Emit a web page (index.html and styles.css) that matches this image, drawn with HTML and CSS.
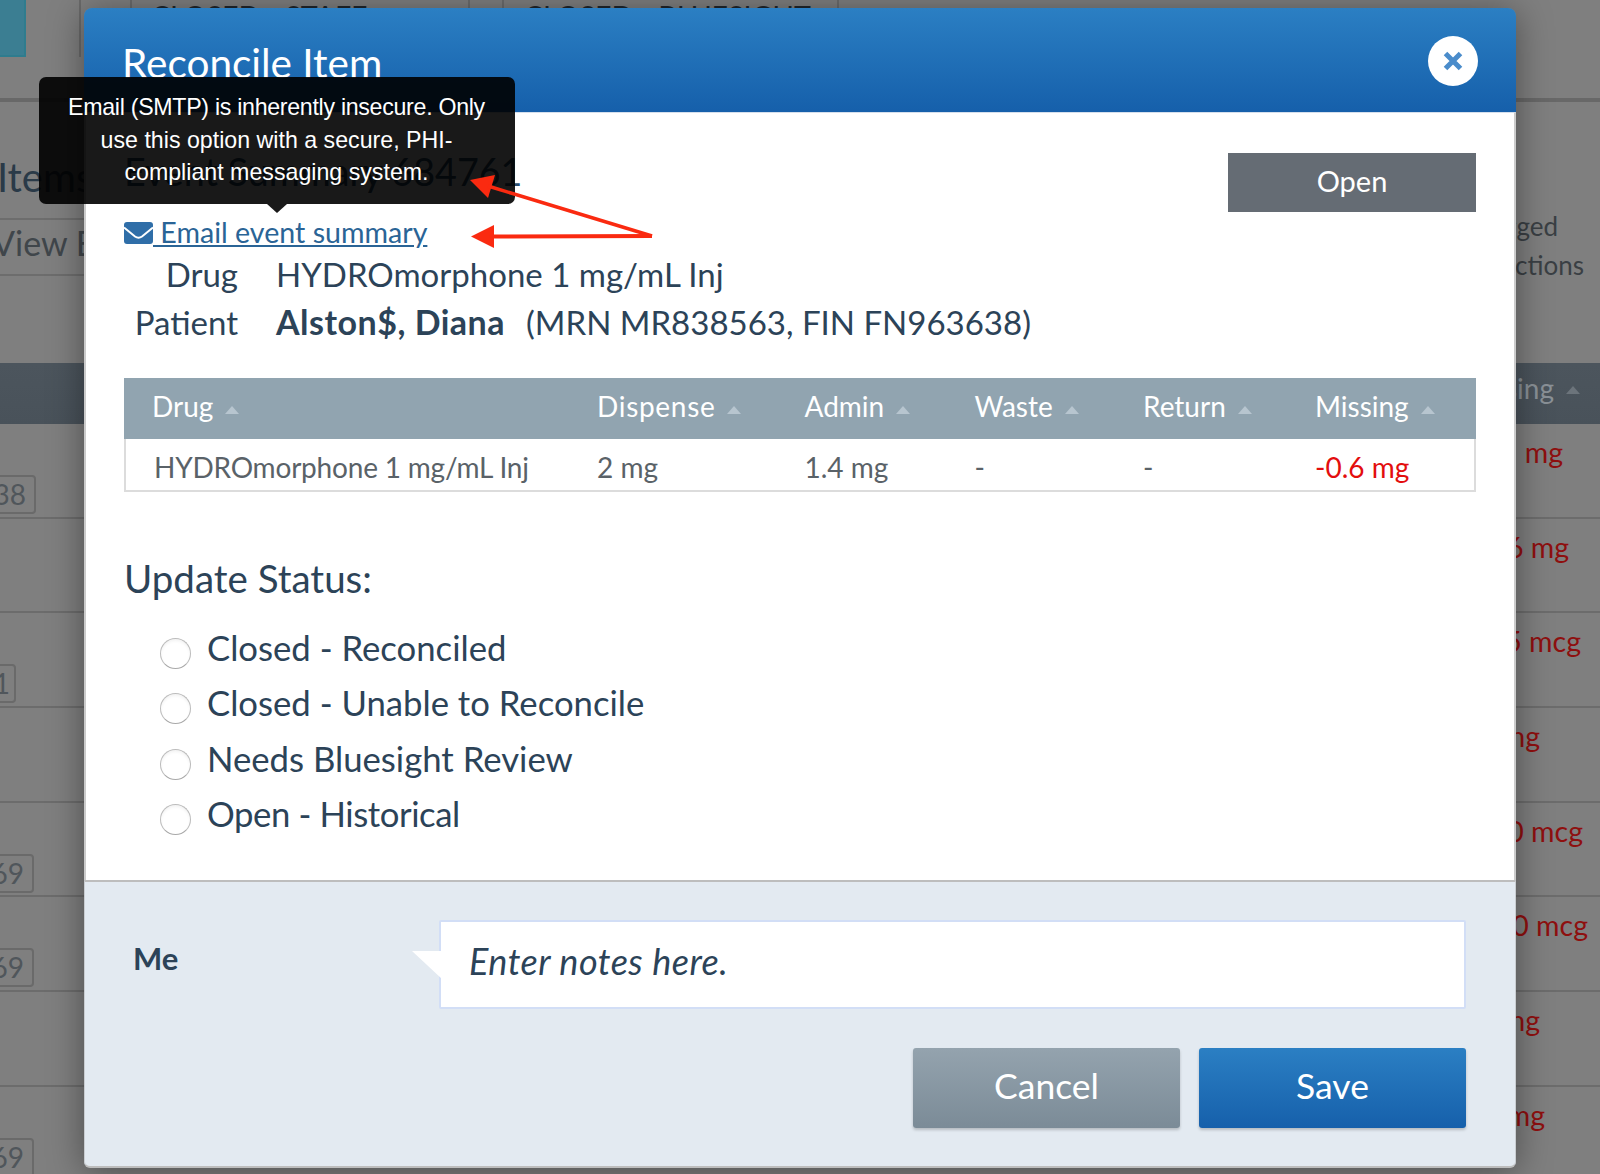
FILE: index.html
```html
<!DOCTYPE html>
<html lang="en">
<head>
<meta charset="utf-8">
<title>Reconcile Item</title>
<link rel="stylesheet" href="styles.css">
</head>
<body>
<div class="page">
  <nav class="tabs">
    <div class="logo"></div>
    <div class="tab-gap"></div>
    <div class="tab tab-staff">CLOSED - STAFF</div>
    <div class="tab tab-blue">CLOSED - BLUESIGHT</div>
  </nav>
  <section class="intro">
    <div class="intro-left">
      <h1 class="page-title">Items</h1>
      <div class="view-row">View Event</div>
    </div>
    <div class="legend">
      <div class="legend-short">Flagged</div>
      <div>Transactions</div>
    </div>
  </section>
  <div class="list-head"><span>Missing</span><i class="caret caret-dim"></i></div>
  <div class="list-row"><span class="tag tag-a">10038</span><span class="amt e37">-1 mg</span></div>
  <div class="list-row"><span></span><span class="amt e31">-6 mg</span></div>
  <div class="list-row"><span class="tag tag-b">10031</span><span class="amt e19">-5 mcg</span></div>
  <div class="list-row"><span></span><span class="amt e60">-1 mg</span></div>
  <div class="list-row"><span class="tag tag-c">10069</span><span class="amt e17">-50 mcg</span></div>
  <div class="list-row"><span class="tag tag-c">10069</span><span class="amt e12">-50 mcg</span></div>
  <div class="list-row"><span></span><span class="amt e60">-1 mg</span></div>
  <div class="list-row"><span class="tag tag-c">10069</span><span class="amt e55">-2 mg</span></div>
</div>

<div class="modal">
  <header class="modal-head">
    <h2 class="modal-title">Reconcile Item</h2>
    <button class="close" type="button" aria-label="Close">
      <svg viewBox="0 0 20 20" width="20" height="20"><path d="M2.500 2.500 17.500 17.500M17.500 2.500 2.500 17.500" fill="none" stroke="#4a8ccb" stroke-width="5"/></svg>
    </button>
  </header>
  <div class="modal-body">
    <div class="summary">
      <div class="summary-main">
        <h3 class="event-title">Event Summary 684761</h3>
        <a class="mail-link" href="#"><svg class="mail-icon" viewBox="0 0 29 22" width="29" height="22"><rect width="29" height="22" rx="3" fill="#2f6ea8"/><path d="M0 5.500 11 14.500Q14.500 17 18 14.500L29 5.500" fill="none" stroke="#fff" stroke-width="2"/></svg> Email event summary</a>
        <dl class="facts">
          <dt>Drug</dt>
          <dd>HYDROmorphone 1 mg/mL Inj</dd>
          <dt>Patient</dt>
          <dd><b>Alston$, Diana</b><span class="ids">(MRN MR838563, FIN FN963638)</span></dd>
        </dl>
      </div>
      <div class="status-pill">Open</div>
    </div>
    <table class="drugs">
      <thead>
        <tr>
          <th class="c1">Drug<i class="caret"></i></th>
          <th class="c2"><span class="wide">Dispense</span><i class="caret"></i></th>
          <th class="c3">Admin<i class="caret"></i></th>
          <th class="c4">Waste<i class="caret"></i></th>
          <th class="c5">Return<i class="caret"></i></th>
          <th class="c6">Missing<i class="caret"></i></th>
        </tr>
      </thead>
      <tbody>
        <tr>
          <td class="first">HYDROmorphone 1 mg/mL Inj</td>
          <td>2 mg</td>
          <td>1.4 mg</td>
          <td>-</td>
          <td>-</td>
          <td class="missing">-0.6 mg</td>
        </tr>
      </tbody>
    </table>
    <h3 class="status-title">Update Status:</h3>
    <div class="radios">
      <label class="radio"><input type="radio" name="status"><span>Closed - Reconciled</span></label>
      <label class="radio"><input type="radio" name="status"><span>Closed - Unable to Reconcile</span></label>
      <label class="radio"><input type="radio" name="status"><span>Needs Bluesight Review</span></label>
      <label class="radio"><input type="radio" name="status"><span class="tight">Open - Historical</span></label>
    </div>
  </div>
  <footer class="modal-foot">
    <div class="note-row">
      <div class="me">Me</div>
      <div class="note">Enter notes here.</div>
    </div>
    <div class="actions">
      <button class="btn btn-cancel" type="button">Cancel</button>
      <button class="btn btn-save" type="button">Save</button>
    </div>
  </footer>
</div>

<div class="tooltip"><span class="tip-first">Email (SMTP) is inherently insecure. Only</span><br>use this option with a secure, PHI-<br>compliant messaging system.</div>

<svg class="annotations" viewBox="0 0 1600 1174" width="1600" height="1174" aria-hidden="true">
  <path d="M470 180 495 175 488 198Z" fill="#fa2a10"/>
  <path d="M488 186 652 236" stroke="#fa2a10" stroke-width="3.500" fill="none"/>
  <path d="M471 236.500 494 225 494 248Z" fill="#fa2a10"/>
  <path d="M490 236.500 652 236" stroke="#fa2a10" stroke-width="4" fill="none"/>
</svg>
</body>
</html>
```
FILE: styles.css
```css
* { box-sizing: border-box; }
html, body { margin: 0; padding: 0; height: 1174px; overflow: hidden; }
body { background: #7f7f7f; font-family: Lato, "Open Sans", sans-serif; color: #2c4358; position: relative; }

/* page behind the dialog */
.page { width: 1600px; height: 1174px; overflow: hidden; color: #3f4549; }
.tabs { display: flex; height: 102px; border-bottom: 4px solid #686868; align-items: flex-start; }
.logo { width: 26px; height: 57px; background: #3b7e92; border-right: 2px solid #2f7c8e; border-bottom: 2px solid #2f7c8e; }
.tab-gap { width: 55px; height: 57px; border-right: 2px solid #6a6a6a; }
.tab { height: 57px; font-size: 28.500px; line-height: 30px; padding-top: 1px; border: 2px solid #6c6c6c; border-top: 0; color: #20262b; white-space: nowrap; }
.tab-staff { width: 340px; padding-left: 19px; margin-left: 49px; }
.tab-blue { width: 337px; padding-left: 20px; margin-left: 32px; }
.intro { display: flex; justify-content: space-between; height: 261px; }
.intro-left { width: 400px; }
.page-title { margin: 51px 0 0 -3px; font-size: 40px; line-height: 48px; font-weight: 400; color: #2a3a48; height: 65px; }
.view-row { border-top: 2px solid #6d6d6d; border-bottom: 2px solid #6d6d6d; height: 58px; font-size: 34px; line-height: 46px; color: #40464b; text-indent: -8px; }
.legend { padding-top: 105px; padding-right: 16px; font-size: 26px; line-height: 39px; text-align: right; color: #3a3f44; }
.legend-short { margin-right: 26px; }
.list-head { height: 61px; background: linear-gradient(#4c555d, #49525a); color: #8a9197; font-size: 28px; line-height: 46px; display: flex; justify-content: flex-end; align-items: flex-start; padding-right: 20px; padding-top: 2px; }
.list-head .caret { margin-top: 21px; }
.list-row { height: 94.700px; border-bottom: 2px solid #6c6c6c; display: flex; justify-content: space-between; align-items: flex-start; }
.tag { width: 100px; height: 39px; margin-top: 51px; border: 2px solid #6a6a6a; border-radius: 4px; font-size: 28px; line-height: 34px; text-align: right; padding-right: 8px; color: #50565b; }
.tag-a { margin-left: -64px; }
.tag-b { margin-left: -84px; padding-right: 4px; }
.tag-c { margin-left: -66px; }
.amt { color: #8e0f0f; font-size: 28.500px; line-height: 40px; margin-top: 8px; }
.e37 { margin-right: 37px; }
.e31 { margin-right: 31px; }
.e19 { margin-right: 19px; }
.e60 { margin-right: 60px; }
.e17 { margin-right: 17px; }
.e12 { margin-right: 12px; }
.e55 { margin-right: 55px; }

/* dialog */
.modal { position: absolute; left: 84px; top: 8px; width: 1432px; height: 1160px; display: flex; flex-direction: column; border-radius: 8px; box-shadow: 0 4px 36px rgba(0, 0, 0, .4); }
.modal-head { flex: none; height: 104px; border-radius: 8px 8px 0 0; background: linear-gradient(#2b7fc3, #1660ab); border-bottom: 2px solid #1660ab; display: flex; justify-content: space-between; align-items: center; padding: 0 38px 0 38px; }
.modal-title { margin: 8px 0 0; font-size: 40.500px; line-height: 46px; font-weight: 400; color: #fff; }
.close { width: 50px; height: 50px; border: 0; border-radius: 50%; background: #fff; padding: 0; display: flex; align-items: center; justify-content: center; margin-top: 4px; }
.modal-body { flex: 1; min-height: 0; background: #fff; padding: 0 38px; border-left: 2px solid #cbcbcb; border-right: 2px solid #cbcbcb; border-top: 1px solid #d5dfec; }
.summary { display: flex; justify-content: space-between; align-items: flex-start; height: 265px; }
.summary-main { padding-top: 37px; }
.event-title { margin: 0 0 23px; font-size: 37.700px; line-height: 44px; font-weight: 400; color: #2c4f70; white-space: nowrap; }
.mail-link { display: block; height: 30px; font-size: 28.600px; line-height: 30px; color: #2a6496; text-decoration: underline; white-space: nowrap; }
.mail-icon { vertical-align: -1px; }
.facts { margin: 3px 0 0; display: grid; grid-template-columns: 114px 1fr; column-gap: 38px; font-size: 33px; line-height: 48px; }
.facts dt { text-align: right; }
.facts dd { margin: 0; white-space: nowrap; }
.facts b { font-weight: 700; font-size: 34px; letter-spacing: .5px; }
.ids { margin-left: 21px; }
.status-pill { margin-top: 40px; width: 248px; height: 59px; background: #656c74; color: #fff; font-size: 29px; line-height: 55px; text-align: center; }
.drugs { width: 1352px; table-layout: fixed; border-collapse: separate; border-spacing: 0; font-size: 28px; }
.drugs th { height: 61px; background: #91a4b0; color: #fff; font-weight: 400; text-align: left; padding: 0 0 6px 28px; }
.drugs td { height: 53px; padding: 4px 0 0 28px; color: #5a6268; border-bottom: 2px solid #dcdcdc; }
.drugs td:first-child { border-left: 2px solid #dcdcdc; }
.drugs td:last-child { border-right: 2px solid #dcdcdc; }
.drugs td.first { letter-spacing: -.2px; }
.drugs .missing { color: #e30e0e; }
.wide { letter-spacing: .7px; }
.c1 { width: 445px; }
.c2 { width: 207.500px; }
.c3 { width: 170px; }
.c4 { width: 168.500px; }
.c5 { width: 172px; }
.c6 { width: 189px; }
.caret { display: inline-block; width: 0; height: 0; margin-left: 12px; border-left: 7.500px solid transparent; border-right: 7.500px solid transparent; border-bottom: 8px solid #b7c5cf; vertical-align: 3px; }
.caret-dim { border-bottom-color: #6c747b; }
.status-title { margin: 64px 0 0; font-size: 38.500px; line-height: 44px; font-weight: 400; color: #2c4358; }
.radios { margin-top: 22px; }
.radio { display: flex; align-items: flex-start; height: 55.400px; margin-left: 36px; font-size: 34.700px; line-height: 52px; color: #2c4358; }
.radio input { appearance: none; margin: 16px 16px 0 0; width: 31px; height: 31px; border-radius: 50%; border: 1px solid #bcbcbc; border-bottom-color: #a9a9a9; background: #fff; box-shadow: inset 0 2px 3px rgba(0, 0, 0, .05); flex: none; }
.tight { letter-spacing: -.4px; }
.modal-foot { flex: none; height: 288px; background: #e3eaf1; border-top: 2px solid #bdbdbd; border-bottom: 2px solid #bdbdbd; border-left: 1px solid #c9cdd1; border-right: 1px solid #c9cdd1; border-radius: 0 0 6px 6px; padding: 38px 49px 0 48px; }
.note-row { display: flex; align-items: flex-start; }
.me { width: 306px; padding-top: 18px; font-size: 31px; line-height: 40px; font-weight: 700; color: #2c4358; }
.note { position: relative; flex: 1; height: 89px; background: #fff; border: 2px solid #d2def6; border-radius: 2px; padding-left: 28px; font-size: 36px; letter-spacing: .5px; line-height: 79px; font-style: italic; color: #2c4358; }
.note::before { content: ""; position: absolute; left: -29px; top: 29px; width: 30px; height: 28px; background: #fff; clip-path: polygon(0 0, 100% 0, 100% 100%); }
.actions { display: flex; justify-content: flex-end; gap: 19px; margin-top: 39px; }
.btn { width: 267px; height: 80px; border: 0; border-radius: 3px; padding: 0 0 6px; color: #fff; font-family: inherit; font-size: 35.500px; box-shadow: 0 2px 3px rgba(0, 0, 0, .2); }
.btn-cancel { background: linear-gradient(#94a3ae, #7b8b97); }
.btn-save { background: linear-gradient(#2b7fc3, #1660ab); }

/* overlays */
.tooltip { position: absolute; left: 38.500px; top: 77px; width: 476px; height: 127px; padding-top: 14px; border-radius: 7px; background: rgba(0, 0, 0, .9); color: #fff; font-family: "Liberation Sans", Arial, sans-serif; font-size: 23.200px; line-height: 32.500px; text-align: center; white-space: nowrap; }
.tip-first { letter-spacing: -.3px; }
.tooltip::after { content: ""; position: absolute; left: 228px; bottom: -9px; border-left: 10px solid transparent; border-right: 10px solid transparent; border-top: 9px solid rgba(0, 0, 0, .9); }
.annotations { position: absolute; left: 0; top: 0; pointer-events: none; }
```
